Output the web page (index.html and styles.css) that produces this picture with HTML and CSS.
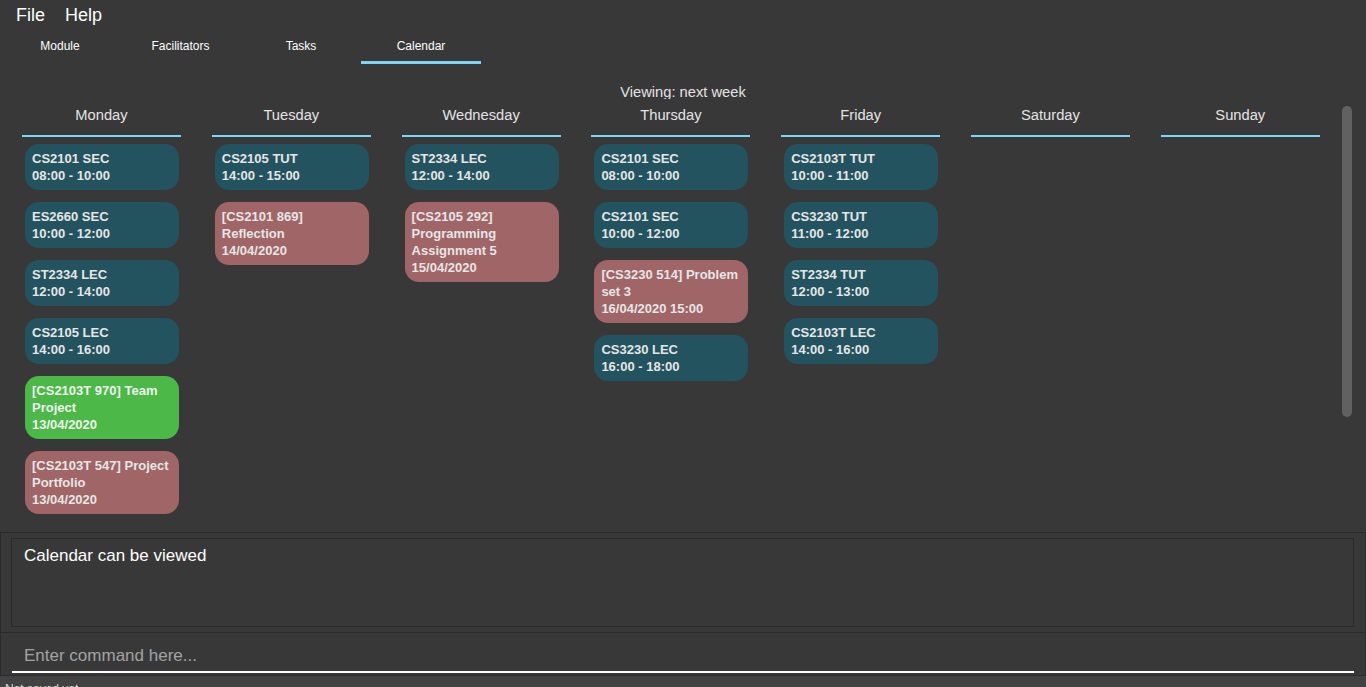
FILE: index.html
```html
<!DOCTYPE html>
<html>
<head>
<meta charset="utf-8">
<link rel="stylesheet" href="styles.css">
</head>
<body>
<div class="app">
  <div class="menubar">
    <span class="menu-item">File</span>
    <span class="menu-item">Help</span>
  </div>
  <div class="tabs">
    <div class="tab">Module</div>
    <div class="tab">Facilitators</div>
    <div class="tab">Tasks</div>
    <div class="tab active">Calendar</div>
  </div>
  <div class="calendar">
    <div class="viewing">Viewing: next week</div>
    <div class="cal-body">
      <div class="week">
        <div class="day">
          <div class="day-head">Monday</div>
          <div class="card session"><div>CS2101 SEC</div><div>08:00 - 10:00</div></div>
          <div class="card session"><div>ES2660 SEC</div><div>10:00 - 12:00</div></div>
          <div class="card session"><div>ST2334 LEC</div><div>12:00 - 14:00</div></div>
          <div class="card session"><div>CS2105 LEC</div><div>14:00 - 16:00</div></div>
          <div class="card done"><div>[CS2103T 970] Team Project</div><div>13/04/2020</div></div>
          <div class="card task"><div>[CS2103T 547] Project Portfolio</div><div>13/04/2020</div></div>
        </div>
        <div class="day">
          <div class="day-head">Tuesday</div>
          <div class="card session"><div>CS2105 TUT</div><div>14:00 - 15:00</div></div>
          <div class="card task"><div>[CS2101 869] Reflection</div><div>14/04/2020</div></div>
        </div>
        <div class="day">
          <div class="day-head">Wednesday</div>
          <div class="card session"><div>ST2334 LEC</div><div>12:00 - 14:00</div></div>
          <div class="card task"><div>[CS2105 292] Programming Assignment 5</div><div>15/04/2020</div></div>
        </div>
        <div class="day">
          <div class="day-head">Thursday</div>
          <div class="card session"><div>CS2101 SEC</div><div>08:00 - 10:00</div></div>
          <div class="card session"><div>CS2101 SEC</div><div>10:00 - 12:00</div></div>
          <div class="card task"><div>[CS3230 514] Problem set 3</div><div>16/04/2020 15:00</div></div>
          <div class="card session"><div>CS3230 LEC</div><div>16:00 - 18:00</div></div>
        </div>
        <div class="day">
          <div class="day-head">Friday</div>
          <div class="card session"><div>CS2103T TUT</div><div>10:00 - 11:00</div></div>
          <div class="card session"><div>CS3230 TUT</div><div>11:00 - 12:00</div></div>
          <div class="card session"><div>ST2334 TUT</div><div>12:00 - 13:00</div></div>
          <div class="card session"><div>CS2103T LEC</div><div>14:00 - 16:00</div></div>
        </div>
        <div class="day">
          <div class="day-head">Saturday</div>
        </div>
        <div class="day">
          <div class="day-head">Sunday</div>
        </div>
      </div>
      <div class="scrollbar"><div class="thumb"></div></div>
    </div>
  </div>
  <div class="result">
    <div class="result-box">Calendar can be viewed</div>
  </div>
  <div class="command">
    <div class="command-input">Enter command here...</div>
  </div>
  <div class="status"><span class="status-text">Not saved yet</span></div>
</div>
</body>
</html>
```

FILE: styles.css
```css
html, body {
  margin: 0;
  padding: 0;
  background: #383838;
  font-family: "Liberation Sans", Arial, sans-serif;
  color: #e8e8e8;
  overflow: hidden;
}

.app {
  width: 1366px;
  height: 687px;
  display: flex;
  flex-direction: column;
  overflow: hidden;
}

.app > * {
  flex: none;
}

.menubar {
  height: 30px;
  display: flex;
  align-items: center;
  gap: 20px;
  padding-left: 16px;
  padding-bottom: 1px;
  box-sizing: border-box;
}

.menu-item {
  font-size: 18px;
  color: #ffffff;
  line-height: 22px;
}

.tabs {
  display: flex;
  height: 34px;
}

.tab {
  width: 120px;
  height: 31px;
  display: flex;
  align-items: center;
  justify-content: center;
  font-size: 12px;
  color: #ffffff;
  border-bottom: 3px solid transparent;
}

.tab:nth-child(2) { width: 121px; }

.tab.active {
  border-bottom-color: #7fd3f7;
}

.calendar {
  height: 468px;
  display: flex;
  flex-direction: column;
}

.viewing {
  margin-top: 20px;
  height: 15px;
  line-height: 17px;
  overflow: hidden;
  text-align: center;
  font-size: 14.7px;
  color: #e4e4e4;
}

.cal-body {
  display: flex;
  margin-top: 7px;
}

.week {
  display: grid;
  grid-template-columns: repeat(7, 159px);
  column-gap: 30.8px;
  padding-left: 22px;
  align-items: start;
}

.day {
  display: flex;
  flex-direction: column;
  gap: 12px;
}

.day-head {
  font-size: 14.7px;
  line-height: 18px;
  text-align: center;
  color: #e4e4e4;
  padding-bottom: 11px;
  border-bottom: 2px solid #7fd3f7;
  margin-bottom: -5px;
}

.card {
  margin-left: 3px;
  width: 154px;
  box-sizing: border-box;
  padding: 6px 7px;
  border-radius: 14px;
  font-size: 13px;
  font-weight: bold;
  line-height: 17px;
  color: #e6e6e6;
}

.card.session { background: #23535f; }
.card.task { background: #a06567; }
.card.done { background: #4bb848; color: #eef6ee; }

.scrollbar {
  margin-left: auto;
  margin-right: 14px;
  width: 10px;
}

.thumb {
  width: 10px;
  height: 311px;
  border-radius: 5px;
  background: #616161;
}

.result {
  height: 100px;
  box-sizing: border-box;
  border-top: 1px solid #2b2b2b;
  border-left: 1px solid #2b2b2b;
  border-right: 1px solid #2b2b2b;
  padding: 5px 11px 5px 10px;
}

.result-box {
  height: 89px;
  box-sizing: border-box;
  border: 1px solid #2a2a2a;
  padding: 7px 12px;
  font-size: 17px;
  line-height: 20px;
  color: #ffffff;
}

.command {
  height: 44px;
  box-sizing: border-box;
  border: 1px solid #2b2b2b;
  padding: 0 11px;
}

.command-input {
  height: 40px;
  box-sizing: border-box;
  padding: 13px 0 0 12px;
  font-size: 17px;
  line-height: 20px;
  color: #a3a3a3;
  border-bottom: 2px solid #ffffff;
}

.status {
  height: 11px;
  box-sizing: border-box;
  background: #424242;
  padding-left: 5px;
  padding-top: 2px;
  font-size: 12px;
  line-height: 14px;
  color: #d8d8d8;
  overflow: hidden;
}

.status-text {
  display: inline-block;
  transform: translateY(4px);
}
```
